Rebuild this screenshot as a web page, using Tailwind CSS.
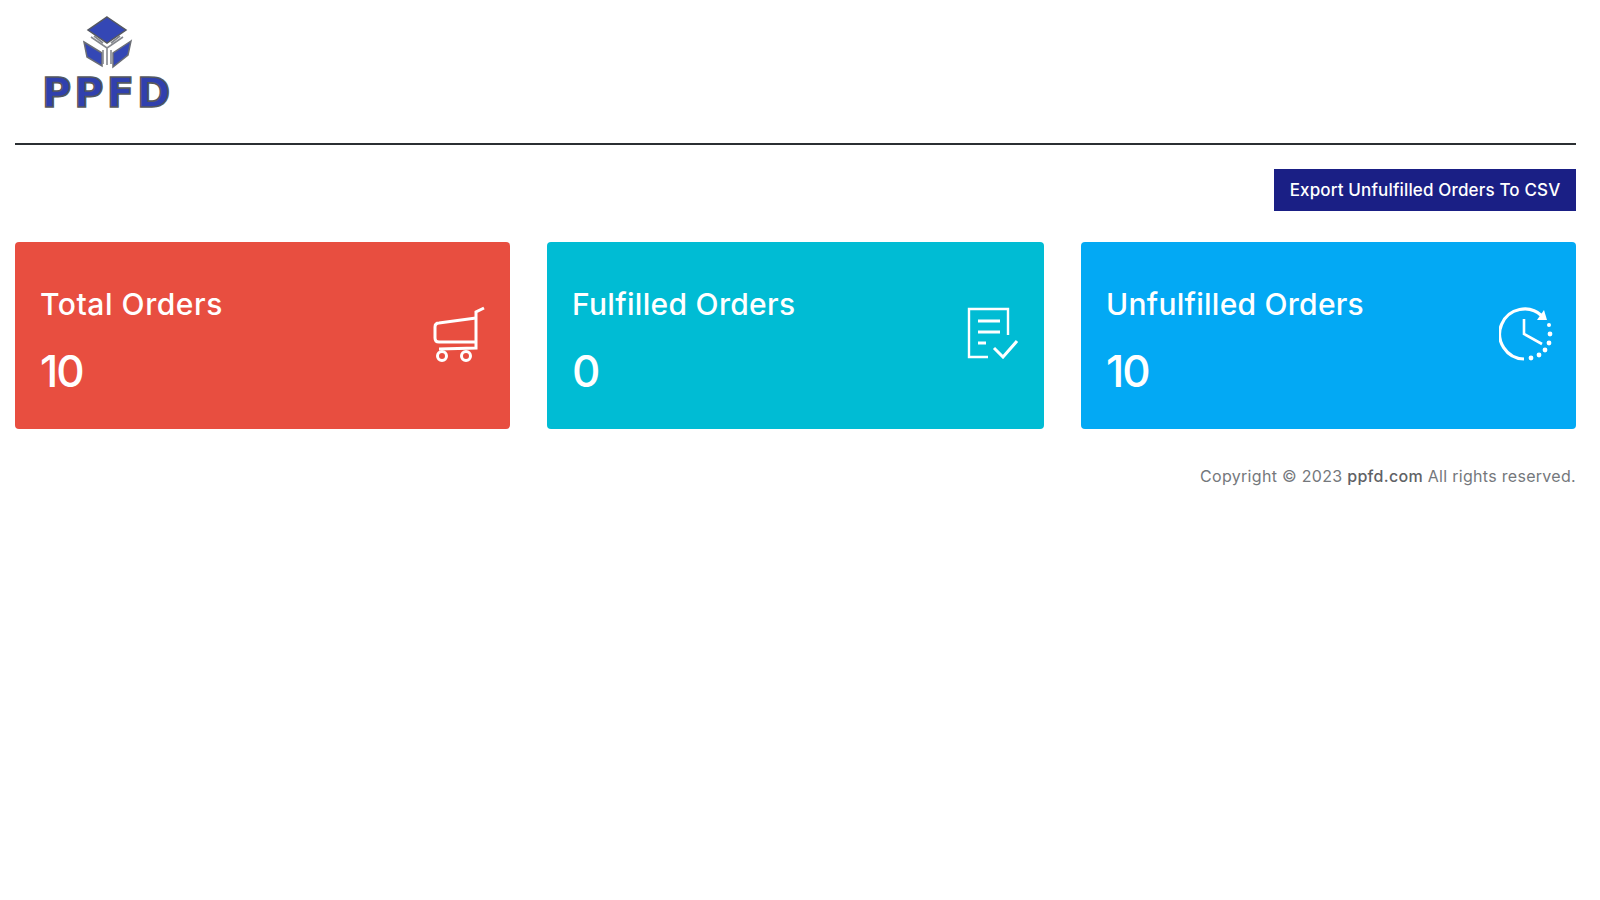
<!DOCTYPE html>
<html lang="en">
<head>
    <meta charset="UTF-8">
    <title>PPFD Dashboard</title>
    <script src="https://cdn.jsdelivr.net/npm/@tailwindcss/browser@4"></script>
</head>
<body class="bg-white font-['Inter',sans-serif]">
    <div class="pl-[15px] pr-[24px]">
        <!-- Logo -->
        <header class="h-[145px] border-b-2 border-[#2b2f33] pt-[14px] pl-[25px]">
            <svg width="140" height="104" viewBox="40 14 140 104" class="block">
                <polygon points="107,17 126,30 107,43 88,30" fill="#3447b5" stroke="#55585f" stroke-width="1.5"/>
                <polygon points="84,42 102,53 102,66 87,57" fill="#3447b5" stroke="#6b6e75" stroke-width="1.5"/>
                <polygon points="131,41 113,53 113,67 128,55" fill="#3447b5" stroke="#6b6e75" stroke-width="1.5"/>
                <path d="M91 37 L107 48 L123 37 M107 48 V65 M94 36 L103 43 M120 36 L111 43 M103 50 V64 M111 50 V64" fill="none" stroke="#85888e" stroke-width="1.6"/>
                <text x="42" y="107" letter-spacing="3" font-family="DejaVu Sans" font-weight="700" font-size="40" fill="#3040ae" stroke="#55585f" stroke-width="1.6">PPFD</text>
            </svg>
        </header>

        <div class="flex justify-end mt-[24px]">
            <button class="h-[42px] w-[302px] pt-[2px] bg-[#1a1f85] text-white text-[17px] font-medium tracking-[0.15px]">Export Unfulfilled Orders To CSV</button>
        </div>

        <!-- Cards -->
        <div class="grid grid-cols-[495px_497px_495px] gap-[37px] mt-[31px]">
            <div class="h-[187px] rounded-[4px] bg-[#e84e40] text-white flex items-center justify-between pl-[25px] pr-[25px]">
                <div class="pt-[10px]">
                    <div class="text-[30px] leading-[36px] font-medium tracking-[0.55px]">Total Orders</div>
                    <div class="text-[44px] leading-[50px] font-medium tracking-[-2px] mt-[24px]">10</div>
                </div>
                <svg width="54" height="58" viewBox="430 304 54 58" fill="none" stroke="white" stroke-width="3" class="-mt-[6px]">
                    <path d="M483 308 L475 312 V348 L438 349"/>
                    <path d="M475 318 L438 323 Q434 323 434 327 V338 Q434 342 438 342 H475"/>
                    <circle cx="441" cy="356" r="4.5"/>
                    <circle cx="465" cy="356" r="4.5"/>
                </svg>
            </div>
            <div class="h-[187px] rounded-[4px] bg-[#00bcd4] text-white flex items-center justify-between pl-[25px] pr-[25px]">
                <div class="pt-[10px]">
                    <div class="text-[30px] leading-[36px] font-medium tracking-[0.3px]">Fulfilled Orders</div>
                    <div class="text-[44px] leading-[50px] font-medium tracking-[-1px] mt-[24px]">0</div>
                </div>
                <svg width="52" height="52" viewBox="967 307 52 52" fill="none" stroke="white" stroke-width="2.4" class="-mt-[5px]">
                    <path d="M1008 335 V309 H969 V357 H988"/>
                    <path d="M978 321 H1000 M978 332 H1000 M978 343 H986" stroke-width="3"/>
                    <path d="M994 348 L1003 357 L1017 341" stroke-width="3"/>
                </svg>
            </div>
            <div class="h-[187px] rounded-[4px] bg-[#03a9f4] text-white flex items-center justify-between pl-[25px] pr-[23px]">
                <div class="pt-[10px]">
                    <div class="text-[30px] leading-[36px] font-medium tracking-[0.25px]">Unfulfilled Orders</div>
                    <div class="text-[44px] leading-[50px] font-medium tracking-[-2px] mt-[24px]">10</div>
                </div>
                <svg width="54" height="54" viewBox="1498 306 54 54" fill="none" stroke="white" stroke-width="3.2" class="-mt-[4px]">
                    <path d="M1523 358 A25 25 0 1 1 1541 315"/>
                    <polygon points="1536,319 1546,319 1543,309" fill="white" stroke="none"/>
                    <path d="M1523 318 V333 L1541 343" stroke-width="2.6"/>
                    <g fill="white" stroke="none">
                        <circle cx="1548" cy="324" r="2"/>
                        <circle cx="1549" cy="333" r="2.4"/>
                        <circle cx="1548" cy="342" r="2.4"/>
                        <circle cx="1544" cy="349" r="2.4"/>
                        <circle cx="1538" cy="354" r="2.4"/>
                        <circle cx="1530" cy="357" r="2.4"/>
                    </g>
                </svg>
            </div>
        </div>

        <p class="text-right text-[#75787c] text-[16px] leading-[24px] tracking-[0.3px] mt-[35px]">Copyright © 2023 <span class="font-medium text-[#5f6266]">ppfd.com</span> All rights reserved.</p>
    </div>
</body>
</html>
